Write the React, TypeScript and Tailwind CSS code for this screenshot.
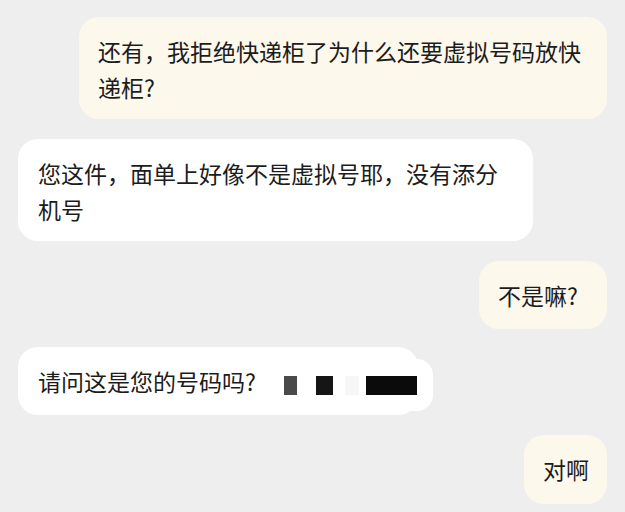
import React from 'react'

const font = { fontFamily: '"Noto Sans CJK SC", "Noto Sans", sans-serif' }

function Sent({ children, className = '' }: { children: React.ReactNode; className?: string }) {
  return (
    <div className={`self-end rounded-[20px] bg-[#fcf8ec] px-[19px] pt-[16px] pb-[14px] text-[23px] leading-[36px] text-[#1c1c1c] ${className}`}>
      {children}
    </div>
  )
}

function Received({ children, className = '' }: { children: React.ReactNode; className?: string }) {
  return (
    <div className={`self-start rounded-[20px] bg-white px-[20px] pt-[16px] pb-[14px] text-[23px] leading-[36px] text-[#1c1c1c] ${className}`}>
      {children}
    </div>
  )
}

export default function App() {
  return (
    <div style={font} className="flex h-[512px] w-[625px] flex-col gap-[20px] overflow-hidden bg-[#eeeeee] pt-[17px] pr-[18px] pl-[18px]">
      <Sent className="w-[528px]">还有，我拒绝快递柜了为什么还要虚拟号码放快递柜?</Sent>
      <Received className="w-[515px]">您这件，面单上好像不是虚拟号耶，没有添分机号</Received>
      <Sent className="w-[128px] pb-[16px] whitespace-nowrap">不是嘛?</Sent>

      {/* phone number bubble, number blurred out */}
      <div className="relative -mt-[2px] self-start">
        <div className="flex h-[68px] w-[400px] items-center rounded-[20px] bg-white px-[20px] text-[23px] text-[#1c1c1c]">
          请问这是您的号码吗?
        </div>
        <div className="absolute top-[12px] left-[250px] flex h-[52px] w-[165px] items-center rounded-[16px] bg-white">
          <span className="ml-[16px] h-[19px] w-[13px] bg-[#4a4a4a]" />
          <span className="ml-[19px] h-[19px] w-[17px] bg-[#151515]" />
          <span className="ml-[12px] h-[19px] w-[14px] bg-[#f7f7f7]" />
          <span className="ml-[7px] h-[19px] w-[51px] bg-[#0b0b0b]" />
        </div>
      </div>

      <Sent className="w-[83px] px-[18px] pb-[17px] whitespace-nowrap">对啊</Sent>
    </div>
  )
}
